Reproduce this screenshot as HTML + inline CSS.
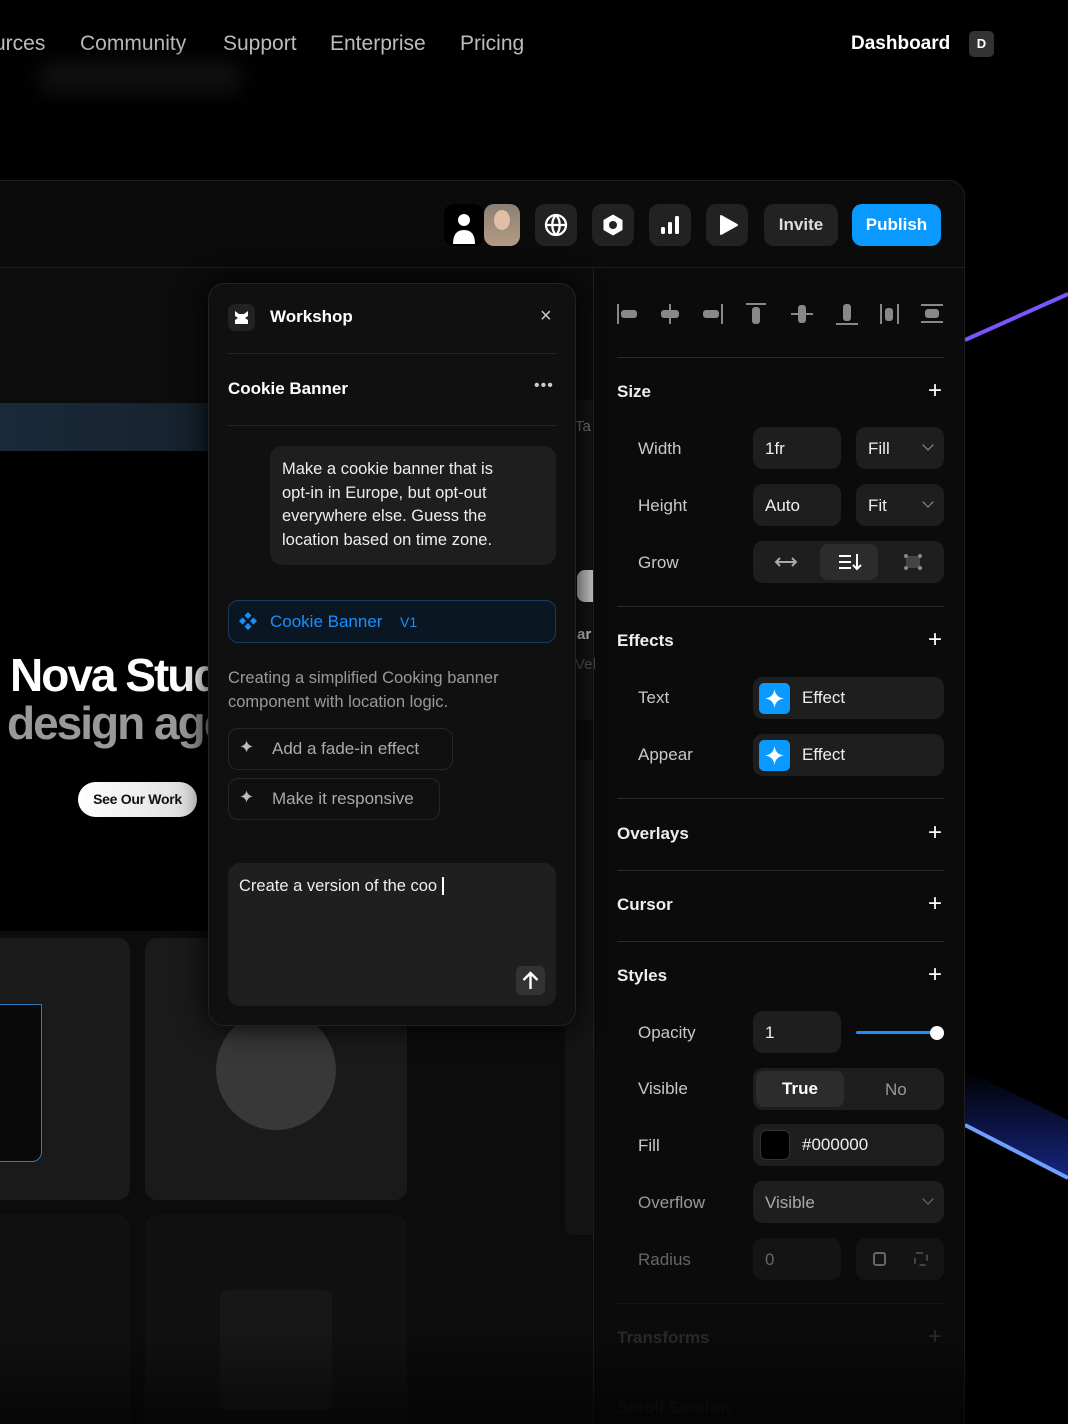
<!DOCTYPE html>
<html><head><meta charset="utf-8">
<style>
*{margin:0;padding:0;box-sizing:border-box}
html,body{width:1068px;height:1424px;overflow:hidden}
body{background:#000;position:relative;font-family:"Liberation Sans",sans-serif;color:#fff}
.a{position:absolute}
.nav{font-size:21px;color:#bdbdbd;top:32px}
.lbl{position:absolute;left:638px;font-size:17px;color:#c8c8c8}
.hd{position:absolute;left:617px;font-size:17px;font-weight:bold;color:#eee}
.pl{position:absolute;left:928px;font-size:24px;color:#fff;line-height:1}
.inp{position:absolute;background:#1e1e1e;border-radius:10px;height:42px;font-size:17px;color:#eee;padding:12px 12px}
.div{position:absolute;left:617px;width:327px;height:1px;background:#2a2a2a}
.tb{position:absolute;top:204px;width:42px;height:42px;border-radius:10px;background:#222}
.chev{position:absolute;right:12px;top:14px;width:8px;height:8px;border-right:1.5px solid #999;border-bottom:1.5px solid #999;transform:rotate(45deg)}
</style></head><body>
<div class="a" style="left:0;top:0;width:1068px;height:1424px;overflow:hidden">
<!-- glows -->
<svg class="a" style="left:940px;top:270px" width="128" height="950">
<defs><linearGradient id="g1" x1="0" y1="1" x2="0" y2="0"><stop offset="0" stop-color="#2a4cff" stop-opacity=".5"/><stop offset="1" stop-color="#2a4cff" stop-opacity="0"/></linearGradient></defs>
<polygon points="25,800 128,850 128,908 25,855" fill="url(#g1)"/>
<line x1="25" y1="70" x2="128" y2="24" stroke="#7a55ff" stroke-width="4"/>
<line x1="25" y1="855" x2="128" y2="908" stroke="#6fa0ff" stroke-width="4"/>
</svg>
<!-- nav -->
<div class="a nav" style="left:-6px">urces</div>
<div class="a nav" style="left:80px">Community</div>
<div class="a nav" style="left:223px">Support</div>
<div class="a nav" style="left:330px">Enterprise</div>
<div class="a nav" style="left:460px">Pricing</div>
<div class="a" style="left:851px;top:33px;font-size:19px;font-weight:bold">Dashboard</div>
<div class="a" style="left:969px;top:31px;width:25px;height:26px;border-radius:5px;background:#333;font-size:13px;font-weight:bold;text-align:center;line-height:26px">D</div>
<div class="a" style="left:40px;top:62px;width:200px;height:30px;background:#111;filter:blur(10px)"></div>
<!-- app frame -->
<div class="a" style="left:-20px;top:180px;width:985px;height:1300px;background:#0b0b0b;border:1px solid #1e1e1e;border-radius:16px"></div>
<div class="a" style="left:0;top:267px;width:964px;height:1px;background:#1e1e1e"></div>
<!-- toolbar -->
<div class="a" style="left:444px;top:204px;width:40px;height:42px;border-radius:10px;background:#000"></div>
<svg class="a" style="left:449px;top:208px" width="30" height="36"><circle cx="15" cy="12" r="6" fill="#fff"/><path d="M4 36 Q4 22 15 22 Q26 22 26 36Z" fill="#fff"/></svg>
<div class="a" style="left:484px;top:204px;width:36px;height:42px;border-radius:10px;background:linear-gradient(#8a8075,#b59b82)"></div>
<div class="a" style="left:494px;top:210px;width:16px;height:20px;border-radius:50%;background:#e0bfa5"></div>
<div class="tb" style="left:535px"></div>
<svg class="a" style="left:544px;top:213px" width="24" height="24" fill="none" stroke="#fff" stroke-width="2.3"><circle cx="12" cy="12" r="10"/><path d="M2 12h20M12 2c-5 5-5 15 0 20M12 2c5 5 5 15 0 20"/></svg>
<div class="tb" style="left:592px"></div>
<svg class="a" style="left:601px;top:213px" width="24" height="24"><path d="M12 1.5L21.5 7v10L12 22.5 2.5 17V7Z" fill="#fff"/><circle cx="12" cy="12" r="4" fill="#222"/></svg>
<div class="tb" style="left:649px"></div>
<svg class="a" style="left:658px;top:213px" width="24" height="24" fill="#fff"><rect x="3" y="14" width="4" height="7" rx="1.5"/><rect x="10" y="9" width="4" height="12" rx="1.5"/><rect x="17" y="3" width="4" height="18" rx="1.5"/></svg>
<div class="tb" style="left:706px"></div>
<svg class="a" style="left:716px;top:213px" width="24" height="24"><path d="M5 3L21 12 5 21Z" fill="#fff" stroke="#fff" stroke-linejoin="round" stroke-width="2"/></svg>
<div class="a" style="left:764px;top:204px;width:74px;height:42px;border-radius:10px;background:#222;font-size:17px;font-weight:bold;text-align:center;line-height:42px;color:#ddd">Invite</div>
<div class="a" style="left:852px;top:204px;width:89px;height:42px;border-radius:10px;background:#0a99ff;font-size:17px;font-weight:bold;text-align:center;line-height:42px">Publish</div>
<!-- canvas -->
<div class="a" style="left:0;top:268px;width:593px;height:1156px;background:#0c0c0c"></div>
<div class="a" style="left:0;top:403px;width:593px;height:48px;background:linear-gradient(90deg,#1a2a3a,#15202b 40%,#151a20)"></div>
<div class="a" style="left:0;top:451px;width:565px;height:480px;background:#000"></div>
<div class="a" style="left:565px;top:400px;width:28px;height:320px;background:#141414"></div>
<div class="a" style="left:575px;top:418px;font-size:15px;color:#777">Ta</div>
<div class="a" style="left:577px;top:570px;width:16px;height:32px;background:#ccc;border-radius:8px 0 0 8px"></div>
<div class="a" style="left:577px;top:626px;font-size:15px;font-weight:bold;color:#ccc">ar</div>
<div class="a" style="left:575px;top:656px;font-size:15px;color:#555">Vel</div>
<div class="a" style="left:10px;top:648px;font-size:46px;font-weight:bold;letter-spacing:-2px;color:#fff">Nova Studio</div>
<div class="a" style="left:7px;top:696px;font-size:46px;font-weight:bold;letter-spacing:-2px;color:#999">design agency</div>
<div class="a" style="left:78px;top:782px;width:119px;height:35px;border-radius:18px;background:linear-gradient(90deg,#fff,#ddd);color:#111;font-size:14px;font-weight:bold;text-align:center;line-height:35px;letter-spacing:-.3px">See Our Work</div>
<div class="a" style="left:-10px;top:938px;width:140px;height:262px;border-radius:12px;background:#1a1a1a"></div>
<div class="a" style="left:-10px;top:1004px;width:52px;height:158px;border:1.5px solid #2a7ac0;background:#0a0a0a;border-radius:0 0 10px 0"></div>
<div class="a" style="left:145px;top:938px;width:262px;height:262px;border-radius:12px;background:#1a1a1a"></div>
<div class="a" style="left:216px;top:1010px;width:120px;height:120px;border-radius:50%;background:#383838"></div>
<div class="a" style="left:-10px;top:1215px;width:140px;height:220px;border-radius:12px;background:#111"></div>
<div class="a" style="left:145px;top:1215px;width:262px;height:220px;border-radius:12px;background:#111"></div>
<div class="a" style="left:220px;top:1290px;width:112px;height:120px;border-radius:8px;background:#171717"></div>
<div class="a" style="left:565px;top:760px;width:28px;height:475px;background:#141414;border-radius:8px 0 0 8px"></div>
<!-- workshop panel -->
<div class="a" style="left:208px;top:283px;width:368px;height:743px;background:#101010;border:1px solid #222;border-radius:16px;box-shadow:0 0 30px #000"></div>
<div class="a" style="left:228px;top:304px;width:27px;height:27px;border-radius:7px;background:#222"></div>
<svg class="a" style="left:233px;top:309px" width="17" height="17" fill="#fff"><path d="M2 2l4 3h5l4-3v5l-3 2 3 2v4H2v-4l3-2-3-2z"/></svg>
<div class="a" style="left:270px;top:307px;font-size:17px;font-weight:bold">Workshop</div>
<div class="a" style="left:540px;top:305px;font-size:20px;color:#ccc">×</div>
<div class="a" style="left:228px;top:353px;width:328px;height:1px;background:#262626"></div>
<div class="a" style="left:228px;top:379px;font-size:17px;font-weight:bold">Cookie Banner</div>
<div class="a" style="left:534px;top:377px;font-size:16px;color:#ccc;letter-spacing:1px">•••</div>
<div class="a" style="left:228px;top:425px;width:328px;height:1px;background:#262626"></div>
<div class="a" style="left:270px;top:446px;width:286px;height:119px;border-radius:12px;background:#1e1e1e;padding:12px 12px;font-size:16.5px;line-height:23.5px;color:#eee;white-space:nowrap">Make a cookie banner that is<br>opt-in in Europe, but opt-out<br>everywhere else. Guess the<br>location based on time zone.</div>
<div class="a" style="left:228px;top:600px;width:328px;height:43px;border-radius:10px;background:#0b1623;border:1px solid #1b3a5c"></div>
<svg class="a" style="left:238px;top:611px" width="20" height="20" fill="#1a8fff"><path d="M10 1l3.5 3.5L10 8 6.5 4.5zM10 12l3.5 3.5L10 19l-3.5-3.5zM4.5 6.5L8 10l-3.5 3.5L1 10zM15.5 6.5L19 10l-3.5 3.5L12 10z"/></svg>
<div class="a" style="left:270px;top:612px;font-size:17px;color:#1a8fff">Cookie Banner</div>
<div class="a" style="left:400px;top:614px;font-size:14px;color:#1a8fff">V1</div>
<div class="a" style="left:228px;top:666px;font-size:16.5px;line-height:24px;color:#999">Creating a simplified Cooking banner<br>component with location logic.</div>
<div class="a" style="left:228px;top:728px;width:225px;height:42px;border:1px solid #262626;border-radius:10px"></div>
<div class="a" style="left:239px;top:737px;font-size:18px;color:#bbb">✦</div>
<div class="a" style="left:272px;top:739px;font-size:17px;color:#aaa">Add a fade-in effect</div>
<div class="a" style="left:228px;top:778px;width:212px;height:42px;border:1px solid #262626;border-radius:10px"></div>
<div class="a" style="left:239px;top:787px;font-size:18px;color:#bbb">✦</div>
<div class="a" style="left:272px;top:789px;font-size:17px;color:#aaa">Make it responsive</div>
<div class="a" style="left:228px;top:863px;width:328px;height:143px;border-radius:12px;background:#1f1f1f"></div>
<div class="a" style="left:239px;top:877px;font-size:16.5px;color:#eee">Create a version of the coo<span style="border-right:2px solid #fff">&nbsp;</span></div>
<div class="a" style="left:516px;top:966px;width:29px;height:29px;border-radius:6px;background:#333"></div>
<svg class="a" style="left:520px;top:970px" width="21" height="21" fill="none" stroke="#fff" stroke-width="2.4"><path d="M10.5 19V3M3.5 10l7-7 7 7"/></svg>
<!-- right panel -->
<div class="a" style="left:593px;top:268px;width:1px;height:1156px;background:#1e1e1e"></div>
<svg class="a" style="left:615px;top:300px" width="335" height="28" fill="#888" stroke="#888" stroke-width="2">
<line x1="3" y1="4" x2="3" y2="24"/><rect x="6" y="10" width="16" height="8" rx="3" stroke="none"/>
<line x1="55" y1="4" x2="55" y2="24"/><rect x="46" y="10" width="18" height="8" rx="3" stroke="none"/>
<line x1="107" y1="4" x2="107" y2="24"/><rect x="88" y="10" width="16" height="8" rx="3" stroke="none"/>
<line x1="131" y1="4" x2="151" y2="4"/><rect x="137" y="7" width="8" height="17" rx="3" stroke="none"/>
<line x1="176" y1="14" x2="198" y2="14"/><rect x="183" y="5" width="8" height="18" rx="3" stroke="none"/>
<line x1="221" y1="24" x2="243" y2="24"/><rect x="228" y="4" width="8" height="17" rx="3" stroke="none"/>
<line x1="266" y1="4" x2="266" y2="24"/><line x1="283" y1="4" x2="283" y2="24"/><rect x="270" y="8" width="8" height="13" rx="3" stroke="none"/>
<line x1="306" y1="5" x2="328" y2="5"/><line x1="306" y1="22" x2="328" y2="22"/><rect x="310" y="9" width="14" height="9" rx="3" stroke="none"/>
</svg>
<div class="div" style="top:357px"></div>
<div class="hd" style="top:382px">Size</div><div class="pl" style="top:379px">+</div>
<div class="lbl" style="top:439px">Width</div>
<div class="inp" style="left:753px;top:427px;width:88px">1fr</div>
<div class="inp" style="left:856px;top:427px;width:88px">Fill<span class="chev"></span></div>
<div class="lbl" style="top:496px">Height</div>
<div class="inp" style="left:753px;top:484px;width:88px">Auto</div>
<div class="inp" style="left:856px;top:484px;width:88px">Fit<span class="chev"></span></div>
<div class="lbl" style="top:553px">Grow</div>
<div class="inp" style="left:753px;top:541px;width:191px;padding:0"></div>
<div class="a" style="left:820px;top:544px;width:58px;height:36px;border-radius:8px;background:#2c2c2c"></div>
<svg class="a" style="left:774px;top:554px" width="24" height="16" fill="none" stroke="#aaa" stroke-width="2"><path d="M2 8h20M6 4L2 8l4 4M18 4l4 4-4 4"/></svg>
<svg class="a" style="left:837px;top:552px" width="26" height="20" stroke="#fff" stroke-width="2" fill="none"><path d="M2 4h12M2 10h12M2 16h12M20 2v15M16 13l4 4 4-4"/></svg>
<svg class="a" style="left:903px;top:553px" width="20" height="18" fill="#888"><rect x="3" y="3" width="14" height="12" fill="#444"/><circle cx="3" cy="3" r="2"/><circle cx="17" cy="3" r="2"/><circle cx="3" cy="15" r="2"/><circle cx="17" cy="15" r="2"/></svg>
<div class="div" style="top:606px"></div>
<div class="hd" style="top:631px">Effects</div><div class="pl" style="top:628px">+</div>
<div class="lbl" style="top:688px">Text</div>
<div class="inp" style="left:753px;top:677px;width:191px;padding:11px 0 0 49px">Effect</div>
<div class="lbl" style="top:745px">Appear</div>
<div class="inp" style="left:753px;top:734px;width:191px;padding:11px 0 0 49px">Effect</div>
<div class="a" style="left:759px;top:683px;width:31px;height:31px;border-radius:5px;background:#0a99ff"></div>
<div class="a" style="left:759px;top:740px;width:31px;height:31px;border-radius:5px;background:#0a99ff"></div>
<svg class="a" style="left:764px;top:688px" width="21" height="21" fill="#fff"><path d="M10.5 1Q11.5 9.5 20 10.5Q11.5 11.5 10.5 20Q9.5 11.5 1 10.5Q9.5 9.5 10.5 1Z"/></svg>
<svg class="a" style="left:764px;top:745px" width="21" height="21" fill="#fff"><path d="M10.5 1Q11.5 9.5 20 10.5Q11.5 11.5 10.5 20Q9.5 11.5 1 10.5Q9.5 9.5 10.5 1Z"/></svg>
<div class="div" style="top:798px"></div>
<div class="hd" style="top:824px">Overlays</div><div class="pl" style="top:821px">+</div>
<div class="div" style="top:870px"></div>
<div class="hd" style="top:895px">Cursor</div><div class="pl" style="top:892px">+</div>
<div class="div" style="top:941px"></div>
<div class="hd" style="top:966px">Styles</div><div class="pl" style="top:963px">+</div>
<div class="lbl" style="top:1023px">Opacity</div>
<div class="inp" style="left:753px;top:1011px;width:88px">1</div>
<div class="a" style="left:856px;top:1031px;width:80px;height:3px;background:#1a8fff;border-radius:2px"></div>
<div class="a" style="left:930px;top:1026px;width:14px;height:14px;border-radius:50%;background:#fff"></div>
<div class="lbl" style="top:1079px">Visible</div>
<div class="inp" style="left:753px;top:1068px;width:191px;padding:0"></div>
<div class="a" style="left:756px;top:1071px;width:88px;height:36px;border-radius:8px;background:#2c2c2c;font-size:17px;font-weight:bold;text-align:center;line-height:36px">True</div>
<div class="a" style="left:885px;top:1080px;font-size:17px;color:#999">No</div>
<div class="lbl" style="top:1136px">Fill</div>
<div class="inp" style="left:753px;top:1124px;width:191px;padding:11px 0 0 49px">#000000</div>
<div class="a" style="left:760px;top:1130px;width:30px;height:30px;border-radius:6px;background:#000;border:1px solid #333"></div>
<div class="lbl" style="top:1193px;color:#999">Overflow</div>
<div class="inp" style="left:753px;top:1181px;width:191px;color:#aaa">Visible<span class="chev" style="border-color:#777"></span></div>
<div class="lbl" style="top:1250px;color:#666">Radius</div>
<div class="inp" style="left:753px;top:1238px;width:88px;color:#666;background:#141414">0</div>
<div class="inp" style="left:856px;top:1238px;width:88px;background:#141414"></div>
<div class="a" style="left:873px;top:1252px;width:13px;height:14px;border:2px solid #666;border-radius:3px"></div>
<div class="a" style="left:914px;top:1252px;width:14px;height:14px;border:2px dashed #444;border-radius:3px"></div>
<div class="div" style="top:1303px;background:#161616"></div>
<div class="hd" style="top:1328px;color:#2a2a2a">Transforms</div><div class="pl" style="top:1325px;color:#2a2a2a">+</div>
<div class="hd" style="top:1398px;color:#151515">Scroll Section</div>
<div class="a" style="left:0;top:1330px;width:965px;height:94px;background:linear-gradient(rgba(0,0,0,0),rgba(0,0,0,.6))"></div>
</div>
</body></html>
